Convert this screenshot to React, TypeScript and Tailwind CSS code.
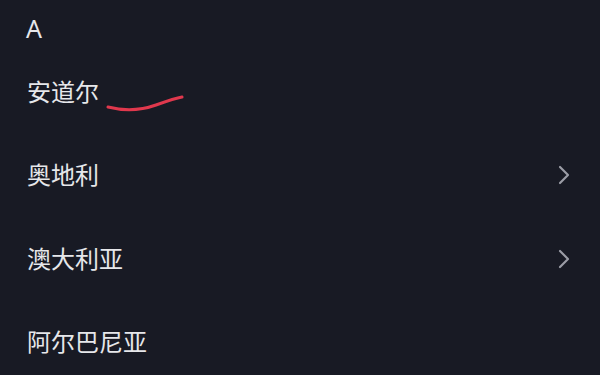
import React from 'react';
import { ChevronRight } from 'lucide-react';

const countries = [
  { name: '安道尔', arrow: false },
  { name: '奥地利', arrow: true },
  { name: '澳大利亚', arrow: true },
  { name: '阿尔巴尼亚', arrow: false },
];

const App = () => {
  return (
    <div
      className="relative h-[375px] w-[600px] overflow-hidden bg-[#181a24] text-[#e6e7ea]"
      style={{ fontFamily: '"Noto Sans", "Noto Sans CJK SC", sans-serif' }}
    >
      {/* Section letter */}
      <div className="h-[50px] pl-[26px] pt-[12px] text-[25px] leading-[32px]">A</div>

      {/* Country rows */}
      <div>
        {countries.map((c) => (
          <div key={c.name} className="flex h-[83.5px] items-center justify-between pl-[27px] pr-[20px]">
            <span className="text-[24px] leading-[32px]">{c.name}</span>
            {c.arrow && <ChevronRight className="h-[32px] w-[32px] text-[#9b9da6]" strokeWidth={1.6} />}
          </div>
        ))}
      </div>

      {/* Hand-drawn red mark */}
      <svg className="absolute left-[104px] top-[92px]" width="84" height="22" viewBox="0 0 84 22">
        <path
          d="M4 15 C 20 19, 38 18, 52 13 S 72 6, 78 5"
          fill="none"
          stroke="#e0384d"
          strokeWidth="3"
          strokeLinecap="round"
        />
      </svg>
    </div>
  );
};

export default App;
